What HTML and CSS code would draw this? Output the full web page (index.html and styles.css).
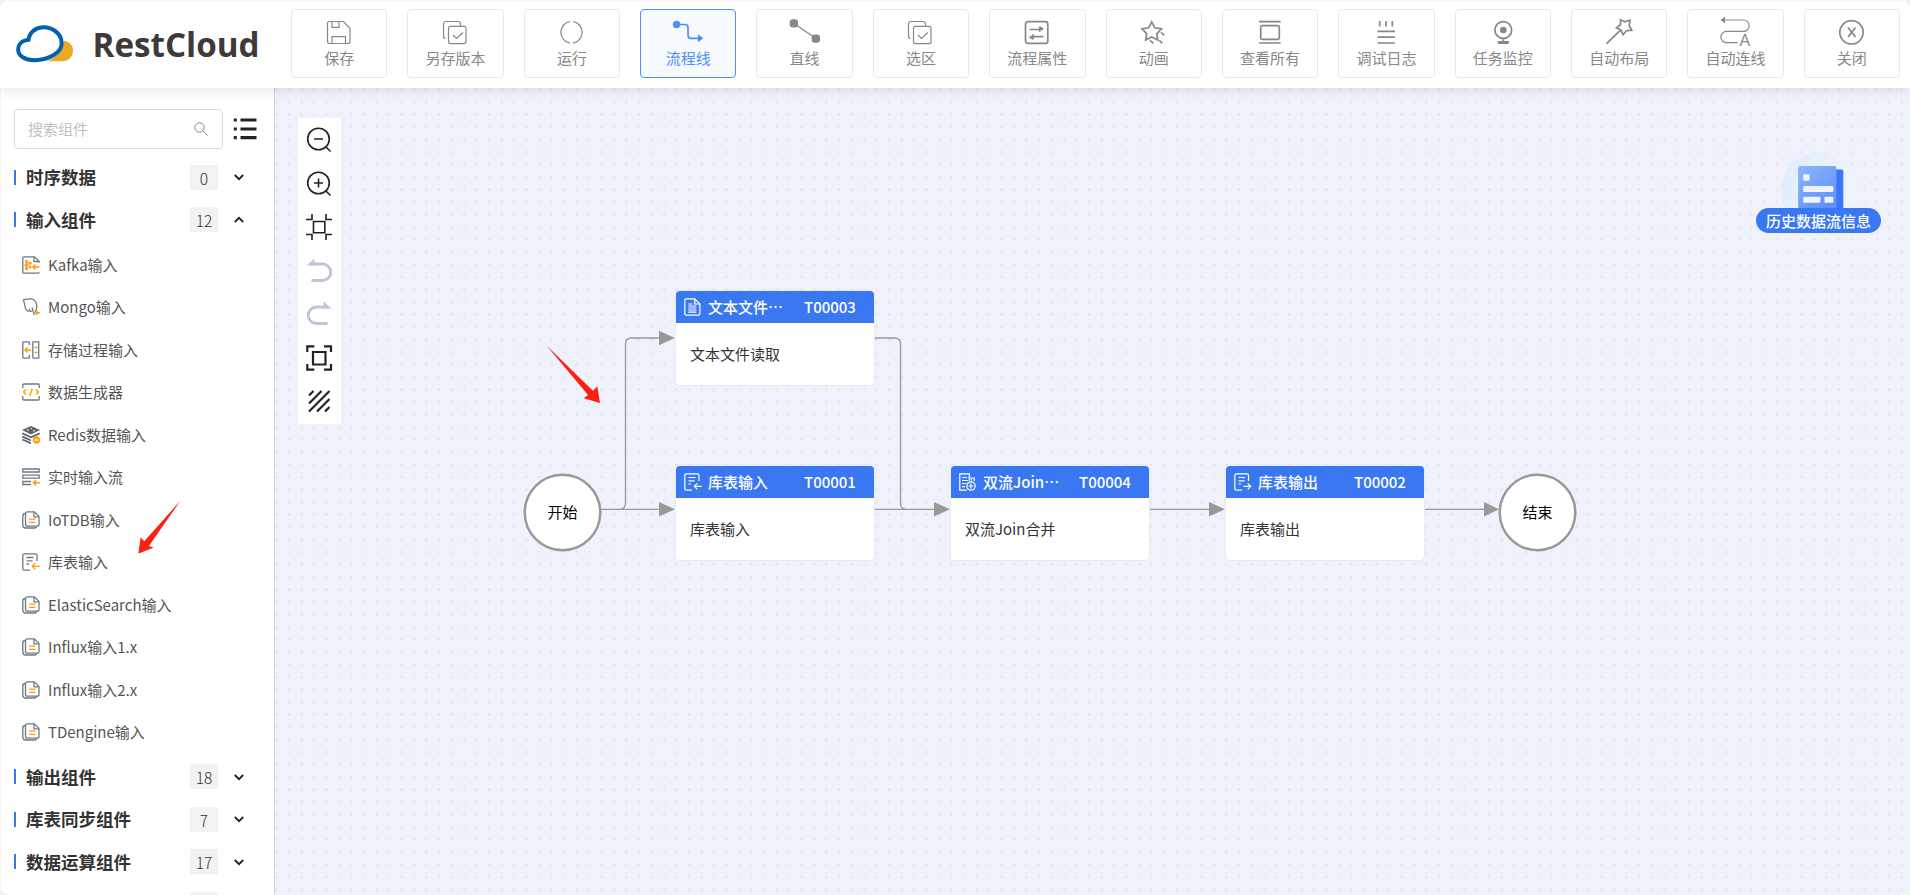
FILE: index.html
```
<!DOCTYPE html>
<html lang="zh-CN">
<head>
	<meta charset="UTF-8">
	<title>RestCloud</title>
	<link rel="stylesheet" href="styles.css">
</head>
<body>
	<!-- shared icons -->
	<svg class="sprite">
		<symbol id="i-copy" viewBox="0 0 40 32"><path d="M9.500 22.500c-1.500 0-2-1-2-2V8c0-1.500 1-2.500 2.500-2.500h12c1.500 0 2.500 1 2.500 2.500v2"/><rect x="12.500" y="10.300" width="17.500" height="17.300" rx="2"/><path d="M17 19l3.500 3.500 6.500-6"/></symbol>
		<symbol id="i-docs" viewBox="0 0 18 18"><path d="M3.500 2.500C1.500 2.500.8 3.500.8 5v9c0 2 1 3 3 3h8.500c1.500 0 2.200-.6 2.200-1.800"/><path d="M5.500.8h7l4.500 4.700v7.700c0 1-.8 2-2 2H5.500c-1 0-2-.8-2-2V2.800c0-1.200.8-2 2-2z"/><path d="M12 1v4.800h4.800"/><path class="hot" d="M7 8.200h6.500M7 11.300h6.500"/></symbol>
		<symbol id="i-table-in" viewBox="0 0 18 18"><path d="M15 8V2.500C15 1.500 14.500.8 13.500.8H2.300C1.300.8.8 1.500.8 2.500v13c0 1 .7 1.700 1.700 1.700h5.500M4.500 4.500h7M4.500 7.800h6M4.500 11h2.500"/><path class="hot" d="M17.700 13.300H10.500M13.300 10.300l-3 3 3 3"/></symbol>
		<symbol id="i-table-out" viewBox="0 0 18 18"><path d="M14.500 8V2.500C14.500 1.500 14 .8 13 .8H2.300C1.300.8.8 1.500.8 2.500v13c0 1 .7 1.700 1.700 1.700h5.500M4.500 4.500h6.500M4.500 7.800h6M4.500 11h2.500"/><path class="hot" d="M9.500 13.300h7M13.700 10.300l3 3-3 3"/></symbol>
		<symbol id="i-down" viewBox="0 0 10 10"><path d="M.8 3l4.200 4.200L9.200 3"/></symbol>
		<symbol id="i-up" viewBox="0 0 10 10"><path d="M.8 7L5 2.800 9.200 7"/></symbol>
	</svg>

	<div class="app">
		<header class="header">
			<svg class="logo" viewBox="0 0 260 88">
				<path class="logo-sun" d="M47 61.300c8-3 15-9 17-20.500 6 1 9 5 9 9.700 0 6-4.500 10.800-10.500 10.800z"/>
				<path class="logo-cloud" d="M28.500 39.800C29.500 32 36 27.300 43.500 27.300c9 0 18.200 6.300 18.200 16 0 9-12 16.700-27 17-9 .2-16.500-4-16.500-10.500 0-5.500 4-9.500 10.300-10z"/>
				<text class="logo-text" x="92.500" y="57" textLength="167" lengthAdjust="spacingAndGlyphs">RestCloud</text>
			</svg>
			<nav class="tools">
				<div class="tool">
					<svg viewBox="0 0 40 32"><path d="M10.500 5.500h14l6.500 7v13c0 1.300-.7 2-2 2H10.500c-1.300 0-2-.7-2-2v-18c0-1.300.7-2 2-2zM13 5.500v5.800h7V5.500M13 27v-6.300h13.500V27"/></svg>
					<span>保存</span>
				</div>
				<div class="tool">
					<svg><use href="#i-copy"/></svg>
					<span>另存版本</span>
				</div>
				<div class="tool">
					<svg viewBox="0 0 40 32"><path d="M18 5.500a11 11 0 0 0 0 21.700M21 5.500a11 11 0 0 1 0 21.700"/></svg>
					<span>运行</span>
				</div>
				<div class="tool active">
					<svg viewBox="0 0 40 32"><circle class="solid" cx="8.600" cy="8.500" r="3.700"/><path class="thick" d="M12 8.500h5c2 0 3 1 3 3v7.500c0 2 1 3.300 3 3.300h8"/><path class="solid" d="M30 18.300l5.300 4-5.300 4z"/></svg>
					<span>流程线</span>
				</div>
				<div class="tool">
					<svg viewBox="0 0 40 32"><path d="M9 7.500l22 15"/><rect class="solid" x="4.700" y="3.300" width="8.300" height="8.300" rx="3"/><rect class="solid" x="26.700" y="18.500" width="8.300" height="8.300" rx="3"/></svg>
					<span>直线</span>
				</div>
				<div class="tool">
					<svg><use href="#i-copy"/></svg>
					<span>选区</span>
				</div>
				<div class="tool">
					<svg viewBox="0 0 40 32"><rect class="thick" x="8.500" y="5.700" width="22.300" height="21.700" rx="2.500"/><path class="thick" d="M12.500 13.500H26M22.700 10.700v5M26.500 20.700h-13.700M16 18.300v5M22.700 10.800l3.500 2.700M16.300 23.300l-3.500-2.600"/></svg>
					<span>流程属性</span>
				</div>
				<div class="tool">
					<svg viewBox="0 0 40 32"><path class="thick" d="M17.700 5.800l3 6 6.800 1-4.700 4.800 1 6.400-6.100-3-6 3 1-6.400L8 12.800l6.700-1zM27 16.300l3.400 3M16 24.300l3.300 3M25.300 24.300l3 3"/></svg>
					<span>动画</span>
				</div>
				<div class="tool">
					<svg viewBox="0 0 40 32"><path class="thick" d="M9 5.700h21.700M9 27h21.700"/><rect class="thick" x="10.700" y="9.700" width="18.600" height="13.600" rx="1.500"/></svg>
					<span>查看所有</span>
				</div>
				<div class="tool">
					<svg viewBox="0 0 40 32"><path class="thick" d="M13.700 5v5.500M20 5v5.500M26.300 5v5.500M11.500 15.300h17.500M11.500 21.200h17.500M11.500 27h17.500"/></svg>
					<span>调试日志</span>
				</div>
				<div class="tool">
					<svg viewBox="0 0 40 32"><circle class="thick" cx="20.300" cy="14" r="8.400"/><circle class="solid" cx="20.300" cy="14" r="3.300"/><path class="thick" d="M20.300 22.500v4"/><path class="fat" d="M16 26.500h8.700"/></svg>
					<span>任务监控</span>
				</div>
				<div class="tool">
					<svg viewBox="0 0 40 32"><path class="thick" d="M7.500 27.700l14-13.500M21.500 3.800l4.300 2 5.200-1.500-.8 5.200 2.500 4.700-5.200.5-3.500 4-2-4.700-4.500-2.200 4-3z"/></svg>
					<span>自动布局</span>
				</div>
				<div class="tool">
					<svg viewBox="0 0 40 32"><path d="M8 4h20.500a5.700 5.700 0 0 1 0 11.400h-17a5.650 5.650 0 0 0 0 11.300h11"/><path class="solid" d="M5.500 4L10 .8v6.400z"/><text class="auto-a" x="24.500" y="30">A</text></svg>
					<span>自动连线</span>
				</div>
				<div class="tool">
					<svg viewBox="0 0 40 32"><circle class="thick" cx="19.500" cy="16.300" r="11.700"/><path class="thick" d="M16 11.500l7.500 9.500M23.500 11.500L16 21"/></svg>
					<span>关闭</span>
				</div>
			</nav>
		</header>

		<div class="main">
			<aside class="sidebar">
				<div class="search-row">
					<div class="search">
						<span>搜索组件</span>
						<svg viewBox="0 0 14 14"><circle cx="5.500" cy="5.500" r="4.700"/><path d="M9 9l4.500 4.500"/></svg>
					</div>
					<svg class="list-icon" viewBox="0 0 24 22"><path d="M7.500 2h16M7.500 11h16M7.500 19.700h16M.8 2h3M.8 11h3M.8 19.700h3"/></svg>
				</div>
				<div class="group"><b>时序数据</b><i>0</i><svg><use href="#i-down"/></svg></div>
				<div class="group"><b>输入组件</b><i>12</i><svg><use href="#i-up"/></svg></div>
				<ul class="items">
					<li><svg viewBox="0 0 18 18"><path d="M17 7V5l-4.500-4.200H2C1.200.8.8 1.200.8 2v14c0 .8.400 1.200 1.200 1.200h14c.7 0 1-.4 1-1.200M12 1v4.500h5"/><path class="hot" d="M17.500 11H11M13.500 8.500L11 11l2.500 2.500"/><g class="dots"><circle cx="4.500" cy="5.500" r="1.600"/><circle cx="4.500" cy="9" r="2"/><circle cx="4.500" cy="12.700" r="1.600"/><circle cx="8" cy="7.200" r="1.600"/><circle cx="8" cy="11" r="1.600"/></g></svg><span>Kafka输入</span></li>
					<li><svg viewBox="0 0 18 18"><path d="M1 2C3.500.6 5.500 1.300 7.500.9c4-.6 6.700 2 7.200 6.100.3 2.700.2 4.500-1.700 6.500M1 2c2 1.500 1 6 3 9.500 1 1.800 2.800 2.300 3.500.5.300 1 1.300 1.700 2.500 1M10.500 9.500c-.5 2.500.3 3 1 4.500l.7 3"/><path class="hot" d="M18 14.800h-4M15.500 13l-2 1.800 2 1.800"/></svg><span>Mongo输入</span></li>
					<li><svg viewBox="0 0 18 18"><path d="M7.300 4V1.500c0-.5-.2-.7-.7-.7H1.500C1 .8.800 1 .8 1.500v15c0 .5.200.7.700.7h5.100c.5 0 .7-.2.700-.7V14M11.500.8h5.200v16.400h-5.200c-.5 0-.7-.2-.7-.7v-15c0-.5.200-.7.700-.7z"/><path class="hot" d="M9 9H3M5.500 6.500L3 9l2.500 2.500M12.500 6.500h3M12.500 11.500h3"/></svg><span>存储过程输入</span></li>
					<li><svg viewBox="0 0 18 18"><path d="M.8 5V2c0-.7.300-1 1-1h14.400c.7 0 1 .3 1 1v3M.8 13v3c0 .7.300 1 1 1h14.400c.7 0 1-.3 1-1v-3"/><path class="hot" d="M4 6.500L1.500 9 4 11.500M14 6.500L16.500 9 14 11.500M10.300 5.500l-2.600 7"/></svg><span>数据生成器</span></li>
					<li><svg viewBox="0 0 18 18"><path class="dark" d="M9 0l9 4-9 4.500L0 4z"/><path class="band" d="M.3 7.300L9 11.300l8.700-4M.3 10.600L9 14.500M.3 13.500L9 17.300"/><circle class="orange" cx="14.500" cy="14" r="3.700"/><path class="mark" d="M16.800 14h-4M14 12.700L12.700 14l1.300 1.300"/><path class="mark" d="M5 4h2M9 2.500h1M11 4.800h2"/></svg><span>Redis数据输入</span></li>
					<li><svg viewBox="0 0 18 18"><path d="M.8 1h16.400v3H.8zM.8 7.200h16.400v3H.8zM9 13.500H.8v3H9"/><path class="hot" d="M18 14.800h-6M14 12.300l-2.500 2.500 2.500 2.500"/></svg><span>实时输入流</span></li>
					<li><svg><use href="#i-docs"/></svg><span>IoTDB输入</span></li>
					<li><svg><use href="#i-table-in"/></svg><span>库表输入</span></li>
					<li><svg><use href="#i-docs"/></svg><span>ElasticSearch输入</span></li>
					<li><svg><use href="#i-docs"/></svg><span>Influx输入1.x</span></li>
					<li><svg><use href="#i-docs"/></svg><span>Influx输入2.x</span></li>
					<li><svg><use href="#i-docs"/></svg><span>TDengine输入</span></li>
				</ul>
				<div class="group"><b>输出组件</b><i>18</i><svg><use href="#i-down"/></svg></div>
				<div class="group"><b>库表同步组件</b><i>7</i><svg><use href="#i-down"/></svg></div>
				<div class="group"><b>数据运算组件</b><i>17</i><svg><use href="#i-down"/></svg></div>
				<div class="group"><b></b><i></i></div>
			</aside>

			<section class="canvas">
				<!-- svg units are window pixels, so the flow can be placed as is -->
				<svg class="edges" viewBox="275 88 1635 807">
					<path d="M600 509.300h60M600 509.300h19.500q6 0 6-6V344q0-6 6-6H660"/>
					<path d="M875 338h19.500q6 0 6 6v159.300q0 6 6 6H935M875 509.300h60"/>
					<path d="M1150 509.300h60M1425 509.300h60"/>
					<path class="tip" d="M659 330.700l16 7.300-16 7.300zM659 502l16 7.300-16 7.300zM934 502l16 7.300-16 7.300zM1209 502l16 7.300-16 7.300zM1484 502l15 7.300-15 7.300z"/>
				</svg>

				<div class="palette">
					<svg viewBox="0 0 28 28"><circle cx="13.500" cy="13" r="10.800"/><path d="M9 13h9M20.500 20.500l5 5"/></svg>
					<svg viewBox="0 0 28 28"><circle cx="13.500" cy="13" r="10.800"/><path d="M9 13h9M13.500 8.500v9M20.500 20.500l5 5"/></svg>
					<svg viewBox="0 0 28 28"><path d="M8.500 8.500h11.300v11.300H8.500zM1 6.500h6V1M27 6.500h-6V1M1 21.500h6V27M27 21.500h-6V27"/></svg>
					<svg class="off" viewBox="0 0 28 28"><path d="M5 7h12.500a8.200 8.200 0 0 1 0 16.500H6.500"/><path class="head" d="M1.500 8.500L9.500 1.500v7z"/></svg>
					<svg class="off" viewBox="0 0 28 28"><path d="M23 7H11.500a8.200 8.200 0 0 0 0 16.500H22.500"/><path class="head" d="M26.500 8.500L18.500 1.500v7z"/></svg>
					<svg class="bold" viewBox="0 0 28 28"><path d="M8 8h12.500v12.500H8zM2.300 8V2.300h7M19 2.300h7V8M2.300 20v5.700h7M19 25.700h7V20"/></svg>
					<svg class="bold" viewBox="0 0 28 28"><path d="M4 8.500L8.500 4M4 16.500L16.500 4M4 24.500L24.500 4M12 24.500L24.500 12M20 24.500l4.500-4.500"/></svg>
				</div>

				<div class="terminal start">开始</div>
				<div class="terminal end">结束</div>

				<div class="node n3">
					<div class="node-head">
						<svg viewBox="0 0 18 18"><path d="M10.700.8H2.500C1.500.8.8 1.500.8 2.500v13c0 1 .7 1.700 1.700 1.700h11.700c1 0 1.700-.7 1.700-1.700V6zM10.700.8V6h5.200M4.300 8h8M4.300 10h8M4.300 12h8M4.300 14.200h8M4.300 6h4"/></svg>
						<span class="name">文本文件…</span><span>T00003</span>
					</div>
					<div class="node-body">文本文件读取</div>
				</div>
				<div class="node n1">
					<div class="node-head">
						<svg><use href="#i-table-in"/></svg>
						<span class="name">库表输入</span><span>T00001</span>
					</div>
					<div class="node-body">库表输入</div>
				</div>
				<div class="node n4">
					<div class="node-head">
						<svg viewBox="0 0 18 18"><path d="M10.300 5V.8H.8v16.400h7M3 4.500h5M3 7.500h6M3 10.500h4M3 13.700h3M10.300 5h5v3M10.300 5v3"/><circle cx="12" cy="13" r="4.200"/><path d="M12 10.500v5M9.500 13h5M12.500 7.500V6"/></svg>
						<span class="name">双流Join…</span><span>T00004</span>
					</div>
					<div class="node-body">双流Join合并</div>
				</div>
				<div class="node n2">
					<div class="node-head">
						<svg><use href="#i-table-out"/></svg>
						<span class="name">库表输出</span><span>T00002</span>
					</div>
					<div class="node-body">库表输出</div>
				</div>

				<div class="history">
					<svg viewBox="0 0 126 56">
						<defs>
							<linearGradient id="paper" x1="0" y1="0" x2=".6" y2="1"><stop offset="0" stop-color="#8fb4fc"/><stop offset="1" stop-color="#5f92fb"/></linearGradient>
							<linearGradient id="halo" x1="0" y1="0" x2="1" y2=".6"><stop offset="0" stop-color="#dfedfe"/><stop offset="1" stop-color="#eff4fb"/></linearGradient>
						</defs>
						<circle cx="62.500" cy="38" r="37.500" fill="url(#halo)"/>
						<rect x="72" y="17.500" width="16" height="45" rx="1.500" fill="#3a76f7"/>
						<rect x="42.500" y="14" width="38.500" height="45" rx="2" fill="url(#paper)"/>
						<g fill="#eef3ff"><rect x="47.500" y="22.300" width="6.500" height="6.500" rx="1"/><rect x="47.500" y="34" width="30.500" height="6" rx="1"/><rect x="47.500" y="45" width="17.500" height="6" rx="1"/><rect x="69" y="45" width="9" height="6" rx="1"/></g>
					</svg>
					<div class="history-label">历史数据流信息</div>
				</div>
			</section>
		</div>

		<!-- red hint arrows -->
		<svg class="hints" viewBox="0 0 1910 895">
			<path d="M138.300 553.700l2.400-16.500 3.600 4L180.500 500.600 149 546l4.700 1.500z"/>
			<path d="M600 403l-2.700-16.700-4.300 4.500L546.500 345.500 588 395l-4.300 3.300z"/>
		</svg>
	</div>
</body>
</html>
```
FILE: styles.css
```
* {
	box-sizing: border-box;
}
body {
	margin: 0;
	background: #f1f1f1;
	font-family: "Noto Sans CJK SC", "Noto Sans", sans-serif;
	font-size: 15px;
	color: #333;
}
svg {
	display: block;
	fill: none;
	flex-shrink: 0;
}
.sprite {
	position: absolute;
	width: 0;
	height: 0;
}
.app {
	position: relative;
	display: flex;
	flex-direction: column;
	height: 895px;
	border-radius: 10px;
	overflow: hidden;
	background: #fff;
}

/* header */
.header {
	display: flex;
	height: 88px;
	flex-shrink: 0;
	padding-right: 10px;
	background: #fff;
	border-top: 1px solid #f7f7f7;
	box-shadow: 0 2px 12px 0 rgba(0,0,0,0.1);
	position: relative;
	z-index: 2;
}
.logo {
	width: 260px;
	height: 88px;
	margin: -1px 31px 0 0;
}
.logo-sun {
	fill: #eca921;
}
.logo-cloud {
	fill: #fff;
	stroke: #0360b0;
	stroke-width: 4;
}
.logo-text {
	font-family: "Open Sans", sans-serif;
	font-weight: 700;
	font-size: 33.5px;
	fill: #3e3a39;
}
.tools {
	display: flex;
	flex: 1;
	gap: 20px;
	padding-top: 8px;
}
.tool {
	flex: 1 1 0;
	height: 69px;
	border: 1px solid #e1eaf8;
	border-radius: 4px;
	display: flex;
	flex-direction: column;
	align-items: center;
	padding-top: 6px;
	line-height: 20px;
	color: #888;
}
.tool svg {
	width: 40px;
	height: 32px;
	stroke: currentColor;
	stroke-width: 1.2;
	overflow: visible;
}
.tool.active {
	color: #4c8dff;
	border-color: #4c8dff;
	background: #f7fbff;
}
.tool .thick {
	stroke-width: 1.7;
}
.tool .fat {
	stroke-width: 2.8;
	stroke-linecap: round;
}
.tool .solid {
	fill: currentColor;
	stroke: none;
}
.auto-a {
	font-family: "Liberation Sans", sans-serif;
	font-size: 16px;
	fill: currentColor;
	stroke: none;
}

.main {
	display: flex;
	flex: 1;
	min-height: 0;
}

/* sidebar */
.sidebar {
	width: 275px;
	flex-shrink: 0;
	border-right: 1px solid #d0d3d8;
	border-left: 1px solid #f5f5f5;
	padding: 21px 17px 0 13px;
	overflow: hidden;
}
.search-row {
	display: flex;
	align-items: center;
	justify-content: space-between;
	margin-bottom: 7px;
}
.search {
	display: flex;
	align-items: center;
	justify-content: space-between;
	width: 209px;
	height: 40px;
	padding: 0 14px 0 13px;
	border: 1px solid #d9d9d9;
	border-radius: 4px;
	color: #bfbfbf;
}
.search span {
	padding-bottom: 2px;
}
.search svg {
	width: 14px;
	height: 14px;
	stroke: #888;
}
.list-icon {
	width: 24px;
	height: 22px;
	stroke: #222;
	stroke-width: 3.2;
}
.group {
	display: flex;
	align-items: center;
	height: 42.660px;
}
.group::before {
	content: "";
	width: 2px;
	height: 15px;
	margin-right: 10px;
	background: #3a78f2;
}
.group b {
	width: 164px;
	font-size: 17.500px;
	font-weight: 700;
	line-height: 24px;
}
.group i {
	width: 28px;
	height: 25px;
	background: #f2f2f2;
	font-style: normal;
	font-weight: 300;
	font-size: 15.500px;
	line-height: 27px;
	text-align: center;
}
.group svg {
	width: 10px;
	height: 10px;
	margin-left: 16px;
	stroke: #222;
	stroke-width: 1.8;
}
.items {
	--hot: #ff9d0a;
	list-style: none;
	margin: 0;
	padding: 2px 0 2px 8px;
}
.items li {
	display: flex;
	align-items: center;
	height: 42.500px;
	color: #555;
}
.items span {
	padding-bottom: 1px;
}
.items svg {
	width: 18px;
	height: 18px;
	margin-right: 8px;
	stroke: #6f7985;
	stroke-width: 1.3;
}
.hot {
	stroke: var(--hot, currentColor);
}
.items .hot {
	stroke-width: 1.5;
}
.dots,
.orange {
	fill: #ff9d0a;
	stroke: none;
}
.dark {
	fill: #5b6570;
	stroke: none;
}
.band {
	stroke: #5b6570;
	stroke-width: 1.8;
}
.mark {
	stroke: #fff;
	stroke-width: 1;
}

/* canvas */
.canvas {
	position: relative;
	flex: 1;
	background: radial-gradient(circle, #e2e5ea 1px, transparent 1.500px) -4.700px -4.700px / 12.500px 12.500px #eff2fa;
}
.edges {
	position: absolute;
	top: 0;
	left: 0;
	width: 1635px;
	height: 807px;
	stroke: #999;
	stroke-width: 1.300;
}
.edges .tip {
	fill: #999;
	stroke: none;
}
.palette {
	position: absolute;
	left: 23px;
	top: 30px;
	width: 43px;
	height: 306px;
	padding: 8px 1px 9px 0;
	display: flex;
	flex-direction: column;
	align-items: center;
	justify-content: space-between;
	background: #fff;
}
.palette svg {
	width: 28px;
	height: 28px;
	stroke: #222;
	stroke-width: 1.600;
}
.palette .bold {
	stroke-width: 2.200;
}
.palette .off {
	stroke: #bcc6d8;
	stroke-width: 2.900;
}
.palette .head {
	fill: #bcc6d8;
	stroke: none;
}
.terminal {
	position: absolute;
	top: 386px;
	width: 77px;
	height: 77px;
	border: 2px solid #999;
	border-radius: 50%;
	background: #fff;
	box-shadow: 0 0 0 .5px #999;
	line-height: 72px;
	text-align: center;
	color: #000;
}
.start {
	left: 249px;
}
.end {
	left: 1224px;
}
.node {
	position: absolute;
	width: 198px;
	height: 94px;
	border-radius: 4px;
	background: #fff;
	box-shadow: 0 0 0 1px #e9ebef;
	overflow: hidden;
}
.node-head {
	display: flex;
	align-items: center;
	height: 32px;
	padding-left: 8px;
	background: #3a78f2;
	color: #fff;
	font-weight: 500;
	line-height: 32px;
}
.node-head svg {
	width: 18px;
	height: 18px;
	margin-right: 6px;
	stroke: #fff;
	stroke-width: 1.200;
}
.node-head .name {
	width: 96px;
	white-space: nowrap;
}
.node-body {
	padding: 19px 14px;
	line-height: 24px;
}
.n3 {
	left: 401px;
	top: 203px;
}
.n1 {
	left: 401px;
	top: 378px;
}
.n4 {
	left: 676px;
	top: 378px;
}
.n2 {
	left: 951px;
	top: 378px;
}
.history {
	position: absolute;
	left: 1481px;
	top: 64px;
	width: 125px;
}
.history svg {
	width: 125px;
	height: 56px;
}
.history-label {
	height: 25px;
	border-radius: 13px;
	background: #3a78f2;
	color: #fff;
	font-weight: 500;
	line-height: 25px;
	text-align: center;
}
.hints {
	position: absolute;
	top: 0;
	left: 0;
	width: 1910px;
	height: 895px;
	fill: #ff1f12;
	z-index: 3;
	pointer-events: none;
}
```
